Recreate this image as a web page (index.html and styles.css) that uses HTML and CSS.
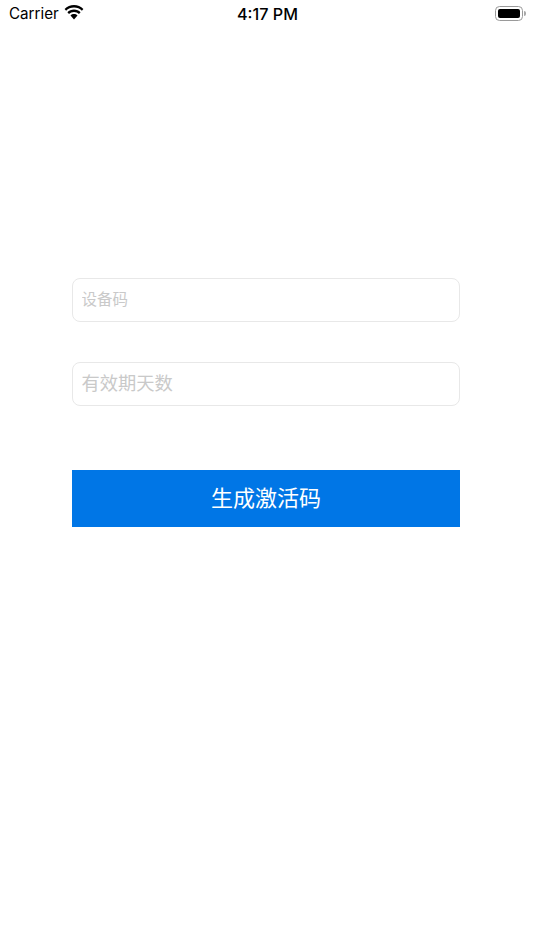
FILE: index.html
```html
<!DOCTYPE html>
<html lang="zh-CN">
<head>
    <meta charset="UTF-8">
    <meta name="viewport" content="width=device-width, initial-scale=1.0">
    <title>生成激活码</title>
    <link rel="stylesheet" href="styles.css">
</head>
<body>

    <!-- Status Bar -->
    <div class="status-bar">
        <div class="status-left">
            <span class="carrier">Carrier</span>
            <svg class="wifi" width="20" height="15" viewBox="0 0 20 15">
                <path d="M10 2.6c3.1 0 5.8 1.2 7.9 3.1l1.5-1.7C16.900 1.600 13.600 0 10 0S3.100 1.600.6 4l1.500 1.700C4.200 3.800 6.900 2.600 10 2.600z"/>
                <path d="M10 7c1.900 0 3.700.8 5 2l1.600-1.800C14.900 5.600 12.600 4.500 10 4.500S5.100 5.600 3.400 7.200L5 9c1.300-1.200 3.100-2 5-2z"/>
                <path d="M10 9c-1.300 0-2.500.5-3.500 1.400L10 14.500l3.500-4.100C12.500 9.500 11.300 9 10 9z"/>
            </svg>
        </div>
        <span class="clock">4:17 PM</span>
        <div class="status-right">
            <div class="battery"><div class="battery-level"></div></div>
            <div class="battery-cap"></div>
        </div>
    </div>

    <!-- Activation Form -->
    <div class="form">
        <input class="field field-small" type="text" placeholder="设备码">
        <input class="field field-large" type="text" placeholder="有效期天数">
        <button class="submit-btn">生成激活码</button>
    </div>

</body>
</html>
```

FILE: styles.css
```css
body {
    font-family: "Liberation Sans", "Noto Sans CJK SC", sans-serif;
    margin: 0;
    background-color: #fff;
    color: #000;
}
.status-bar {
    display: grid;
    grid-template-columns: 1fr auto 1fr;
    align-items: center;
    height: 27px;
    padding: 0 8px 0 9px;
}
.status-left {
    display: flex;
    align-items: center;
    gap: 5px;
}
.carrier {
    font-family: "Inter", "Liberation Sans", sans-serif;
    font-size: 15.2px;
}
.wifi {
    margin-bottom: 3px;
}
.clock {
    font-family: "Inter", "Liberation Sans", sans-serif;
    font-size: 16.2px;
    font-weight: 500;
}
.status-right {
    display: flex;
    align-items: center;
    justify-content: flex-end;
    gap: 1px;
}
.battery {
    width: 28px;
    height: 15px;
    box-sizing: border-box;
    padding: 2px;
    border: 1px solid #9a9a9a;
    border-radius: 4.5px;
}
.battery-level {
    height: 100%;
    background-color: #000;
    border-radius: 2px;
}
.battery-cap {
    width: 2px;
    height: 5px;
    background-color: #a8a8a8;
    border-radius: 0 2px 2px 0;
}
.form {
    display: flex;
    flex-direction: column;
    width: 388px;
    margin: 251px 0 0 72px;
}
.field {
    box-sizing: border-box;
    height: 44px;
    padding: 0 8.5px 4px;
    border: 1px solid #e8e8e8;
    border-radius: 8px;
    background: #fff;
    font-family: "Noto Sans CJK SC", sans-serif;
    outline: none;
}
.field::placeholder {
    color: #c9c9c9;
}
.field-small {
    font-size: 15.5px;
    margin-bottom: 39.5px;
}
.field-large {
    font-size: 18.3px;
    margin-bottom: 64.5px;
}
.submit-btn {
    height: 57px;
    border: none;
    border-radius: 0;
    background-color: #0076e6;
    color: #fff;
    font-family: "Noto Sans CJK SC", sans-serif;
    font-size: 22px;
    padding: 0 0 6px;
}
```
